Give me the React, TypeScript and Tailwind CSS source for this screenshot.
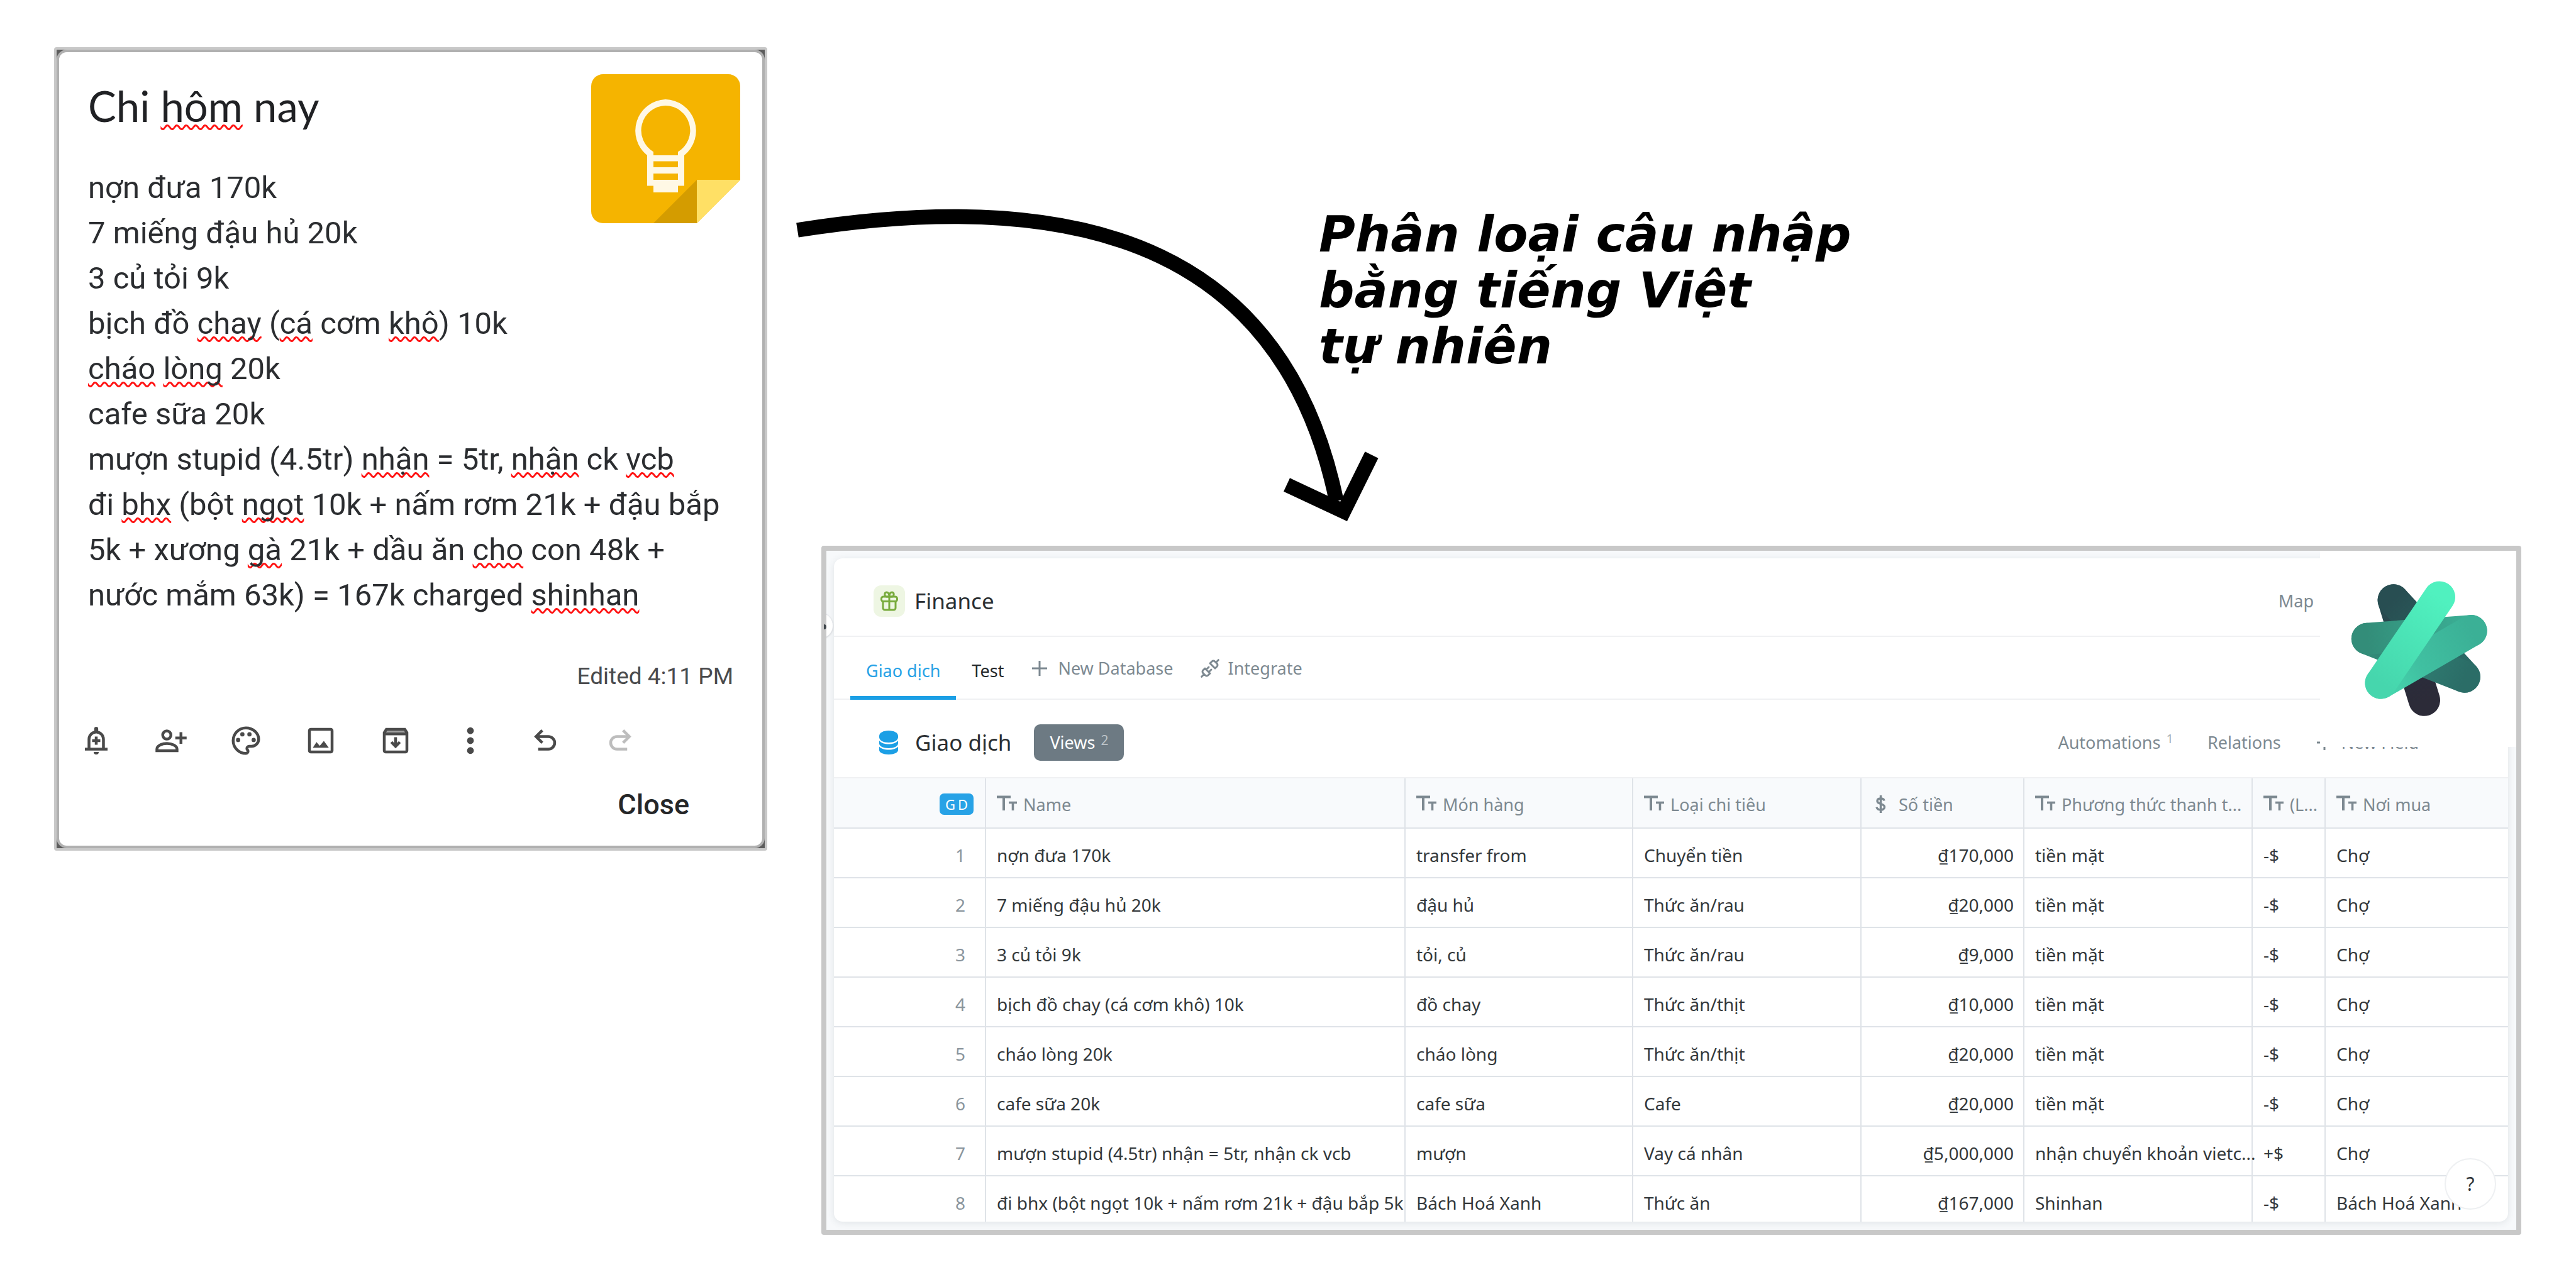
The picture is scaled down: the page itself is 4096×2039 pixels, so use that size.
import type { ReactNode } from 'react';

type Piece = string | { miss: string };

const m = (miss: string): Piece => ({ miss });

const noteLines: Piece[][] = [
  ['nợn đưa 170k'],
  ['7 miếng đậu hủ 20k'],
  ['3 củ tỏi 9k'],
  ['bịch đồ ', m('chay'), ' (', m('cá'), ' cơm ', m('khô'), ') 10k'],
  [m('cháo'), ' ', m('lòng'), ' 20k'],
  ['cafe sữa 20k'],
  ['mượn stupid (4.5tr) ', m('nhận'), ' = 5tr, ', m('nhận'), ' ck ', m('vcb')],
  ['đi ', m('bhx'), ' (bột ', m('ngọt'), ' 10k + nấm rơm 21k + đậu bắp'],
  ['5k + xương ', m('gà'), ' 21k + dầu ăn ', m('cho'), ' con 48k +'],
  ['nước mắm 63k) = 167k charged ', m('shinhan')],
];

const rows: string[][] = [
  ['nợn đưa 170k', 'transfer from', 'Chuyển tiền', '₫170,000', 'tiền mặt', '-$', 'Chợ'],
  ['7 miếng đậu hủ 20k', 'đậu hủ', 'Thức ăn/rau', '₫20,000', 'tiền mặt', '-$', 'Chợ'],
  ['3 củ tỏi 9k', 'tỏi, củ', 'Thức ăn/rau', '₫9,000', 'tiền mặt', '-$', 'Chợ'],
  ['bịch đồ chay (cá cơm khô) 10k', 'đồ chay', 'Thức ăn/thịt', '₫10,000', 'tiền mặt', '-$', 'Chợ'],
  ['cháo lòng 20k', 'cháo lòng', 'Thức ăn/thịt', '₫20,000', 'tiền mặt', '-$', 'Chợ'],
  ['cafe sữa 20k', 'cafe sữa', 'Cafe', '₫20,000', 'tiền mặt', '-$', 'Chợ'],
  ['mượn stupid (4.5tr) nhận = 5tr, nhận ck vcb', 'mượn', 'Vay cá nhân', '₫5,000,000', 'nhận chuyển khoản vietc...', '+$', 'Chợ'],
  ['đi bhx (bột ngọt 10k + nấm rơm 21k + đậu bắp 5k', 'Bách Hoá Xanh', 'Thức ăn', '₫167,000', 'Shinhan', '-$', 'Bách Hoá Xanh'],
];

const columns: { label: string; money?: boolean }[] = [
  { label: 'Name' },
  { label: 'Món hàng' },
  { label: 'Loại chi tiêu' },
  { label: 'Số tiền', money: true },
  { label: 'Phương thức thanh t...' },
  { label: '(L...' },
  { label: 'Nơi mua' },
];

function Misspelt({ children }: { children: ReactNode }) {
  return (
    <span className="underline decoration-[#ff1414] decoration-wavy decoration-[3px] underline-offset-4 [text-decoration-skip-ink:none]">
      {children}
    </span>
  );
}

function ToolIcon({ children }: { children: ReactNode }) {
  return (
    <svg viewBox="0 0 24 24" className="block size-[54px]" fill="none" stroke="currentColor" strokeWidth="2" aria-hidden="true">
      {children}
    </svg>
  );
}

const undoPath = 'M9.9 4.7 5.5 9.1l4.4 4.4M5.5 9.1h8.7a4.45 4.45 0 0 1 0 8.9H7';

const noteTools: { name: string; icon: ReactNode; faded?: boolean }[] = [
  {
    name: 'Remind me',
    icon: (
      <ToolIcon>
        <path d="M4 18h16M6.9 18v-7a5.1 5.1 0 0 1 10.2 0v7M9.1 12h5.8M12 9.1v5.8" />
        <path d="M10.6 5.5V3.6a1.4 1.4 0 0 1 2.8 0v1.9zM10.2 20h3.6a1.8 1.8 0 0 1-3.6 0z" fill="currentColor" stroke="none" />
      </ToolIcon>
    ),
  },
  {
    name: 'Collaborator',
    icon: (
      <ToolIcon>
        <circle cx="9" cy="8" r="2.9" />
        <path d="M2 19.1V18c0-2.5 3.5-4 7.1-4s7.1 1.5 7.1 4v1.1zM15 10.1h8M19 6v8.2" />
      </ToolIcon>
    ),
  },
  {
    name: 'Background options',
    icon: (
      <ToolIcon>
        <path d="M12 3a9 9 0 0 0 0 18c.85 0 1.5-.66 1.5-1.5 0-.4-.15-.75-.4-1.02-.24-.26-.38-.6-.38-.98 0-.84.66-1.5 1.5-1.5H16a5 5 0 0 0 5-5c0-4.42-4.03-8-9-8z" />
        <g fill="currentColor" stroke="none">
          <circle cx="6.5" cy="11.5" r="1.5" />
          <circle cx="9.5" cy="7.5" r="1.5" />
          <circle cx="14.5" cy="7.5" r="1.5" />
          <circle cx="17.5" cy="11.5" r="1.5" />
        </g>
      </ToolIcon>
    ),
  },
  {
    name: 'Add image',
    icon: (
      <ToolIcon>
        <rect x="4" y="4" width="16" height="16" rx="1" />
        <path d="M6.4 17 9 13l2.3 2.7 2.9-3.5L17.7 17z" fill="currentColor" stroke="none" />
      </ToolIcon>
    ),
  },
  {
    name: 'Archive',
    icon: (
      <ToolIcon>
        <path d="M5.4 4h13.2L20 6.6H4z" fill="#a3a3a3" stroke="none" />
        <path d="M4 6.3 5.5 4h13L20 6.3V19a1 1 0 0 1-1 1H5a1 1 0 0 1-1-1zM4 7.2h16M12 9.6V16M9 13l3 3 3-3" />
      </ToolIcon>
    ),
  },
  {
    name: 'More',
    icon: (
      <ToolIcon>
        <g fill="currentColor" stroke="none">
          <circle cx="12" cy="5" r="2.4" />
          <circle cx="12" cy="12" r="2.4" />
          <circle cx="12" cy="19" r="2.4" />
        </g>
      </ToolIcon>
    ),
  },
  { name: 'Undo', icon: <ToolIcon><path d={undoPath} /></ToolIcon> },
  {
    name: 'Redo',
    faded: true,
    icon: <ToolIcon><path d={undoPath} transform="matrix(-1 0 0 1 24 0)" /></ToolIcon>,
  },
];

function KeepLogo() {
  return (
    <svg viewBox="0 0 237 237" className="absolute top-[35px] right-[35px] size-[237px]" role="img" aria-label="Google Keep">
      <path d="M19 0H218a19 19 0 0 1 19 19V168L168 237H19a19 19 0 0 1-19-19V19A19 19 0 0 1 19 0z" fill="#f5b400" />
      <path d="M168 168 99 237H168z" fill="#d49c00" />
      <path d="M168 168H237L168 237z" fill="#ffe065" />
      <path
        fillRule="evenodd"
        fill="#fff8e5"
        d="M118 40a50 50 0 0 1 30 89V177.500H138V188H99V177.500H89V129A50 50 0 0 1 118 40zM118 50a39.500 39.500 0 0 0-19 73.500V129H138V123.500A39.500 39.500 0 0 0 118 50zM99 138.500V148H138V138.500zM99 158V168H138V158z"
      />
    </svg>
  );
}

function NoteCard() {
  return (
    <section aria-label="Note" className="self-start rounded-[4px] border-4 border-[#c8c8c8] bg-[#5c5c5c]">
      <div className="relative rounded-[16px] border-4 border-[#b0b0b0] bg-white pt-[45px] pb-[39px] pl-[46px] font-[Roboto,sans-serif] text-[#2b2d30]">
        <KeepLogo />
        <h2 className="font-[Lato,sans-serif] text-[67px] leading-[80px] text-[#202124]">
          Chi <Misspelt>hôm</Misspelt> nay
        </h2>
        <div className="mt-[55px] text-[49px] leading-[72px]">
          {noteLines.map((line, i) => (
            <p key={i} className="whitespace-nowrap">
              {line.map((p, j) => (typeof p === 'string' ? p : <Misspelt key={j}>{p.miss}</Misspelt>))}
            </p>
          ))}
        </div>
        <p className="mt-[71px] pr-[46px] text-right text-[37px] leading-[44px] text-[#4a4b4d]">Edited 4:11 PM</p>
        <div className="-ml-3.5 mt-[53px] flex gap-[65px]">
          {noteTools.map((t) => (
            <button key={t.name} type="button" aria-label={t.name} className={t.faded ? 'text-[#bdbdbd]' : 'text-[#4a4a4a]'}>
              {t.icon}
            </button>
          ))}
        </div>
        <div className="mt-[49px] flex justify-end pr-[116px]">
          <button type="button" className="text-[45px] leading-[52px] font-medium text-[#252628]">
            Close
          </button>
        </div>
      </div>
    </section>
  );
}

function PlusIcon() {
  return (
    <svg viewBox="0 0 24 24" className="size-6 shrink-0" stroke="currentColor" strokeWidth="3" aria-hidden="true">
      <path d="M0 12h24M12 0v24" />
    </svg>
  );
}

function TextTypeIcon() {
  return (
    <svg viewBox="0 0 32 24" className="mt-[5px] h-6 w-8 shrink-0" fill="none" stroke="currentColor" aria-hidden="true">
      <path d="M0 2.500h22M11 2.500V24" strokeWidth="4" />
      <path d="M19 11.500h13M25.500 11.500V24" strokeWidth="3.600" />
    </svg>
  );
}

function DollarTypeIcon() {
  return (
    <svg viewBox="0 0 32 28" className="mt-[5px] h-7 w-8 shrink-0" fill="none" stroke="currentColor" strokeWidth="3.400" aria-hidden="true">
      <path d="M19 8.500C18.500 6 16.500 5 13.500 5 10 5 8 6.500 8 9c0 6 11.500 3.200 11.500 9.500 0 2.800-2.500 4.500-6 4.500S7.500 21.500 7 18.800M13.500 0v28" />
    </svg>
  );
}

function FiberyMark() {
  return (
    <svg viewBox="0 0 1140 1140" className="size-[266px]" strokeWidth="216" strokeLinecap="round" role="img" aria-label="Fibery">
      <defs>
        <linearGradient id="f1" gradientUnits="userSpaceOnUse" x1="402" y1="225" x2="612" y2="907">
          <stop offset="0" stopColor="#284e52" />
          <stop offset="0.750" stopColor="#2a2c3b" />
          <stop offset="1" stopColor="#2c2b38" />
        </linearGradient>
        <linearGradient id="f2" gradientUnits="userSpaceOnUse" x1="402" y1="225" x2="886" y2="748">
          <stop offset="0" stopColor="#284e52" />
          <stop offset="1" stopColor="#2b6d67" />
        </linearGradient>
        <linearGradient id="f3" gradientUnits="userSpaceOnUse" x1="223" y1="488" x2="886" y2="748">
          <stop offset="0" stopColor="#338d79" />
          <stop offset="0.600" stopColor="#2f7a70" />
          <stop offset="1" stopColor="#2b6d67" />
        </linearGradient>
        <linearGradient id="f4" gradientUnits="userSpaceOnUse" x1="223" y1="488" x2="932" y2="434">
          <stop offset="0" stopColor="#338d79" />
          <stop offset="1" stopColor="#3bb096" />
        </linearGradient>
        <linearGradient id="f5" gradientUnits="userSpaceOnUse" x1="932" y1="434" x2="316" y2="790">
          <stop offset="0" stopColor="#3bb096" />
          <stop offset="0.600" stopColor="#40c0a1" />
          <stop offset="1" stopColor="#46d6ad" />
        </linearGradient>
        <linearGradient id="f6" gradientUnits="userSpaceOnUse" x1="316" y1="790" x2="715" y2="204">
          <stop offset="0" stopColor="#46d6ad" />
          <stop offset="1" stopColor="#50f1bf" />
        </linearGradient>
      </defs>
      <path d="M402 225 612 907" stroke="url(#f1)" />
      <path d="M402 225 886 748" stroke="url(#f2)" />
      <path d="M223 488 886 748" stroke="url(#f3)" />
      <path d="M223 488 932 434" stroke="url(#f4)" />
      <path d="M932 434 316 790" stroke="url(#f5)" />
      <path d="M316 790 715 204" stroke="url(#f6)" />
    </svg>
  );
}

function FinanceTable() {
  return (
    <table className="w-full table-fixed border-separate border-spacing-0 text-left">
      <colgroup>
        <col className="w-[242px]" />
        <col />
        <col className="w-[362px]" />
        <col className="w-[363px]" />
        <col className="w-[259px]" />
        <col className="w-[363px]" />
        <col className="w-[116px]" />
        <col className="w-[290px]" />
      </colgroup>
      <thead className="bg-[#f8fafc] text-[27px] leading-10 text-[#7d8991]">
        <tr>
          <th scope="col" className="h-20 border-r-2 border-b-2 border-[#dfe3e8] p-0 pt-1 pr-[18px] align-middle font-normal">
            <div className="ml-auto flex h-[34px] w-[54px] items-center justify-center rounded-[7px] bg-[#27a2e6] pl-1 text-[22px] leading-[34px] text-white">
              <span className="tracking-[4px]">GD</span>
            </div>
          </th>
          {columns.map((c) => (
            <th
              key={c.label}
              scope="col"
              className="h-20 overflow-hidden border-r-2 border-b-2 border-[#dfe3e8] p-0 pt-[22px] pl-[17px] align-top font-normal whitespace-nowrap last:border-r-0"
            >
              <div className="flex gap-[10px]">
                {c.money ? <DollarTypeIcon /> : <TextTypeIcon />}
                {c.label}
              </div>
            </th>
          ))}
        </tr>
      </thead>
      <tbody className="text-[28px] leading-10 text-[#33383b]">
        {rows.map((r, i) => (
          <tr key={r[0]} className="group">
            <td className="h-[79px] border-r-2 border-b-2 border-[#dfe3e8] p-0 pt-[22px] pr-[31px] text-right align-top text-[#8a959d] group-last:h-[72px] group-last:border-b-0">
              {i + 1}
            </td>
            {r.map((cell, j) => (
              <td
                key={j}
                className={
                  'h-[79px] border-r-2 border-b-2 border-[#dfe3e8] p-0 pt-[22px] align-top whitespace-nowrap last:border-r-0 group-last:h-[72px] group-last:border-b-0 ' +
                  (j === 3 ? 'pr-[15px] text-right' : 'pl-[17px]')
                }
              >
                {cell}
              </td>
            ))}
          </tr>
        ))}
      </tbody>
    </table>
  );
}

function FinancePanel() {
  return (
    <section
      aria-label="Finance space"
      className="relative ml-[38px] rounded-[4px] border-8 border-[#c8c8c8] bg-[#f7f9fb] pt-3 pr-[13px] pb-[13px] pl-3 font-['Noto_Sans','Open_Sans',sans-serif]"
    >
      <div className="absolute top-[98px] left-0 h-[46px] w-3 overflow-hidden">
        <div className="-ml-[31px] size-[42px] rounded-full border border-[#e3e5ea] bg-white shadow" />
      </div>
      <div className="absolute top-[117px] -left-1 h-2 w-1 rounded-r-full bg-[#3f464b]" />

      <div className="overflow-hidden rounded-[14px] bg-white shadow-[0_2px_12px_rgba(60,70,80,0.12)]">
        <header className="flex h-[125px] items-center border-b-2 border-[#f0f1f3] pt-3 pr-[309px] pl-[63px]">
          <span className="flex size-[50px] items-center justify-center rounded-[12px] bg-[#eef6e3] text-[#78ab3d]">
            <svg viewBox="0 0 28 32" className="h-8 w-7" fill="none" stroke="currentColor" strokeWidth="3" strokeLinejoin="round" aria-hidden="true">
              <rect x="1.500" y="9" width="25" height="7.500" rx="3" />
              <path d="M4 16.500V27a3 3 0 0 0 3 3h14a3 3 0 0 0 3-3V16.500M14 9v21M14 9H9.500C6.500 9 5.500 2 9.500 2 12.500 2 14 5 14 9zm0 0h4.500c3 0 4-7 0-7C15.500 2 14 5 14 9z" />
            </svg>
          </span>
          <h1 className="ml-[15px] text-[35px] leading-[48px] text-[#2b2f32]">Finance</h1>
          <a href="#map" className="ml-auto text-[27px] leading-10 text-[#7d8991]">
            Map
          </a>
        </header>

        <nav aria-label="Databases" className="flex h-[100px] border-b-2 border-[#f0f1f3] pl-[26px] text-[27px] leading-10 text-[#7d8991]">
          <a href="#giao-dich" aria-current="page" className="-mb-0.5 border-b-6 border-[#1b9fe5] px-[25px] pt-[34px] text-[#27a2e6]">
            Giao dịch
          </a>
          <a href="#test" className="px-[25px] pt-[34px] text-[#24282a]">
            Test
          </a>
          <button type="button" className="ml-5 flex items-center gap-[17px] pt-0.5">
            <PlusIcon />
            New Database
          </button>
          <button type="button" className="ml-[42px] flex items-center gap-[13px] pt-0.5">
            <svg viewBox="0 0 24 24" className="size-8" fill="none" stroke="currentColor" strokeWidth="2.200" strokeLinecap="round" strokeLinejoin="round" aria-hidden="true">
              <path d="m19 5 3-3M2 22l3-3M6.300 20.300a2.400 2.400 0 0 0 3.400 0L12 18l-6-6-2.300 2.300a2.400 2.400 0 0 0 0 3.400zM7.500 13.500l3-3M10.500 16.500l3-3M12 6l6 6 2.300-2.300a2.400 2.400 0 0 0 0-3.400l-2.600-2.600a2.400 2.400 0 0 0-3.400 0z" />
            </svg>
            Integrate
          </button>
        </nav>

        <div className="flex h-[125px] items-center border-b-2 border-[#f0f1f3] pt-3 pr-[142px] pl-[72px]">
          <svg viewBox="0 0 30 38" className="h-[38px] w-[30px] text-[#1b9fe5]" fill="currentColor" aria-hidden="true">
            <path d="M15 0c8.500 0 15 3.500 15 8.500v2C30 15.500 23.500 19 15 19S0 15.500 0 10.500v-2C0 3.500 6.500 0 15 0z" />
            <path d="M0 16c3 3.700 8.500 5.500 15 5.500S27 19.700 30 16v4.500c0 4.500-6.500 7.500-15 7.500S0 25 0 20.500z" />
            <path d="M0 25.500C3 29 8.500 30.500 15 30.500s12-1.500 15-5V31c0 4-6.500 7-15 7S0 35 0 31z" />
          </svg>
          <h2 className="ml-[27px] text-[35px] leading-[48px] text-[#2b2f32]">Giao dịch</h2>
          <button type="button" className="ml-[36px] flex h-[58px] items-center gap-[9px] rounded-[10px] bg-[#6d7a83] px-[25px] text-[27px] leading-10 text-white">
            Views
            <span className="pb-2 text-[21px] leading-8 text-[#bcc3c8]">2</span>
          </button>
          <div className="ml-auto flex items-center text-[27px] leading-10 text-[#7d8991]">
            <a href="#automations" className="flex items-center gap-[9px]">
              Automations
              <span className="pb-3 text-[20px] leading-8 text-[#a4adb3]">1</span>
            </a>
            <a href="#relations" className="ml-[54px]">
              Relations
            </a>
            <button type="button" className="ml-[57px] flex items-center gap-[15px]">
              <PlusIcon />
              New Field
            </button>
          </div>
        </div>

        <FinanceTable />
      </div>

      <div className="absolute top-0 right-0 flex size-[312px] items-start bg-white pt-[26px] pl-[23px]">
        <FiberyMark />
      </div>
      <button
        type="button"
        aria-label="Help"
        className="absolute right-8 bottom-8 size-[82px] rounded-full border-2 border-[#eef0f2] bg-white text-[30px] leading-10 text-[#2f3437]"
      >
        ?
      </button>
    </section>
  );
}

export default function App() {
  return (
    <main className="grid min-h-screen grid-cols-[1134fr_2741fr] gap-12 bg-white pt-[75px] pr-[87px] pb-[75px] pl-[86px]">
      <NoteCard />
      <div>
        <div className="flex">
          <svg viewBox="0 0 829 793" className="h-[793px] w-[829px] shrink-0 overflow-visible" fill="none" stroke="#000" aria-hidden="true">
            <path d="M0 291C477 215 777 335 857 722" strokeWidth="23.500" />
            <path d="M778 696 868.500 738.500 913 648.500" strokeWidth="23.500" />
          </svg>
          <p className="mt-[254px] font-['DejaVu_Sans',sans-serif] text-[79px] leading-[89px] font-bold text-black italic">
            Phân loại câu nhập
            <br />
            bằng tiếng Việt
            <br />
            tự nhiên
          </p>
        </div>
        <FinancePanel />
      </div>
    </main>
  );
}
